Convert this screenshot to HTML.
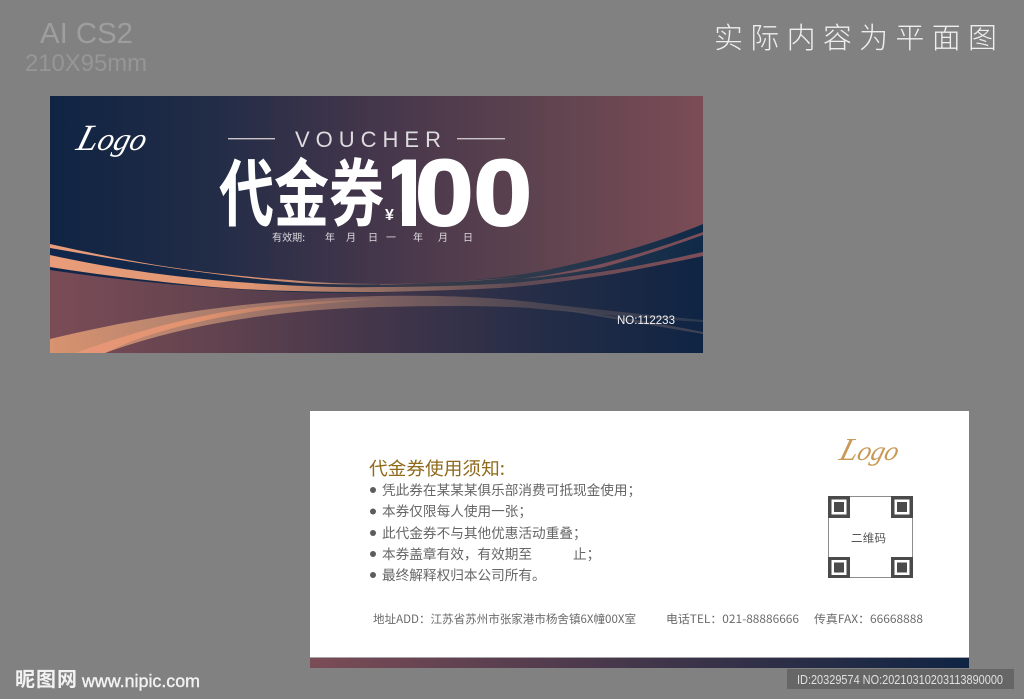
<!DOCTYPE html>
<html lang="zh">
<head>
<meta charset="utf-8">
<title>代金券</title>
<style>
html,body{margin:0;padding:0;background:#818181;width:1024px;height:699px;overflow:hidden}
svg{display:block}
.s{font-family:"Liberation Sans","Noto Sans CJK SC",sans-serif}
.c{font-family:"Noto Sans CJK SC","Liberation Sans",sans-serif}
</style>
</head>
<body>
<svg width="1024" height="699" viewBox="0 0 1024 699" xmlns="http://www.w3.org/2000/svg">
<defs>
<linearGradient id="top" gradientUnits="userSpaceOnUse" x1="50" y1="0" x2="703" y2="0">
<stop offset="0" stop-color="#0f2443"/><stop offset=".25" stop-color="#222c47"/><stop offset=".5" stop-color="#45364b"/><stop offset=".75" stop-color="#5e434f"/><stop offset="1" stop-color="#7b4c56"/>
</linearGradient>
<linearGradient id="bot" gradientUnits="userSpaceOnUse" x1="50" y1="0" x2="703" y2="0">
<stop offset="0" stop-color="#7b4c56"/><stop offset=".25" stop-color="#62434f"/><stop offset=".5" stop-color="#43364a"/><stop offset=".75" stop-color="#252d47"/><stop offset="1" stop-color="#0f2443"/>
</linearGradient>
<linearGradient id="nav" gradientUnits="userSpaceOnUse" x1="50" y1="0" x2="703" y2="0">
<stop offset="0" stop-color="#10264a"/><stop offset=".35" stop-color="#1a2b48"/><stop offset=".55" stop-color="#3a3a48"/><stop offset=".75" stop-color="#2c3a4c"/><stop offset="1" stop-color="#0f2a48"/>
</linearGradient>
<linearGradient id="or" gradientUnits="userSpaceOnUse" x1="50" y1="0" x2="703" y2="0">
<stop offset="0" stop-color="#e89c7a"/><stop offset=".3" stop-color="#e09673"/><stop offset=".52" stop-color="#8e6b62"/><stop offset=".72" stop-color="#5e4a55"/><stop offset="1" stop-color="#7f4f58"/>
</linearGradient>
<linearGradient id="sw" gradientUnits="userSpaceOnUse" x1="50" y1="0" x2="703" y2="0">
<stop offset="0" stop-color="#d8936f"/><stop offset=".2" stop-color="#b5836f"/><stop offset=".5" stop-color="#7f6160"/><stop offset=".75" stop-color="#4a4552"/><stop offset="1" stop-color="#2d3a50"/>
</linearGradient>
<linearGradient id="sw2" gradientUnits="userSpaceOnUse" x1="50" y1="0" x2="470" y2="0">
<stop offset="0" stop-color="#e8987a"/><stop offset=".35" stop-color="#e2936f"/><stop offset=".8" stop-color="#8d6a62"/><stop offset="1" stop-color="#6a5560" stop-opacity=".4"/>
</linearGradient>
<linearGradient id="bar" gradientUnits="userSpaceOnUse" x1="310" y1="0" x2="969" y2="0">
<stop offset="0" stop-color="#7b4c56"/><stop offset=".5" stop-color="#43364a"/><stop offset="1" stop-color="#0f2443"/>
</linearGradient>
<linearGradient id="gold" gradientUnits="userSpaceOnUse" x1="840" y1="435" x2="898" y2="465">
<stop offset="0" stop-color="#c99a56"/><stop offset="1" stop-color="#e3bd83"/>
</linearGradient>
<clipPath id="one"><polygon points="392,150 416,150 416,230 402,230 402,212 392,212"/></clipPath>
</defs>

<rect width="1024" height="699" fill="#818181"/>

<!-- Header text -->
<text class="s" x="40" y="43" font-size="29" fill="#9e9e9e" textLength="93" lengthAdjust="spacingAndGlyphs">AI CS2</text>
<text class="s" x="25" y="71" font-size="24" fill="#969696" textLength="122" lengthAdjust="spacingAndGlyphs">210X95mm</text>
<text class="c" x="714" y="48" font-size="29" fill="#eeeeee" textLength="283" style="font-weight:300">实际内容为平面图</text>

<!-- Voucher front -->
<rect x="50" y="96" width="653" height="257" fill="url(#top)"/>
<path d="M50 244C130 262 200 274 290 280C320 283 350 284 380 284C430 284 490 281 547 270C600 259 655 244 703 224V353H50Z" fill="url(#nav)"/>
<path d="M50 270C130 282 230 291 330 293C400 294 470 289 560 277C620 268 665 262 703 256V353H50Z" fill="url(#bot)"/>
<path d="M50 244C130 262 200 274 290 280C320 283 350 284 385 284C340 285 310 284 288 282C200 274 130 262 50 248Z" fill="url(#or)"/>
<path d="M50 255C110 268 160 275 213 280C270 285 330 288 380 287C430 287 480 285 513 283C550 279 580 275 613 270C650 264 680 257 703 252V256C680 261 650 267 613 274C580 279 540 285 500 288C460 290 420 291 380 292C320 292 260 291 213 287C150 281 100 275 50 267Z" fill="url(#or)"/>
<path d="M703 232C670 244 630 257 597 265C570 271 550 275 520 279C555 276 575 272 600 268C635 259 675 245 703 235Z" fill="#7b4f59"/>
<path d="M380 284C420 284 470 282 520 277L480 280C440 283 410 284 380 285Z" fill="#7a5c5c"/>
<!-- lower swoosh -->
<path d="M50 339C130 320 240 299 380 296C450 295 500 298 540 303C600 310 660 316 703 320V322C650 319 590 314 530 308C480 305 430 306 380 307C290 309 190 322 105 353H50Z" fill="url(#sw)"/>
<path d="M75 353C130 333 190 316 250 308C300 302 340 300 380 299C330 303 290 306 250 312C190 322 140 335 105 353Z" fill="url(#sw2)"/>
<path d="M545 307C600 314 655 322 703 332V334C650 325 595 316 545 307Z" fill="#4a4a58" opacity=".8"/>

<text transform="translate(75,150) skewX(-16)" font-family="Liberation Serif,serif" font-style="italic" fill="#ffffff"><tspan font-size="37">L</tspan><tspan font-size="32">ogo</tspan></text>

<rect x="228" y="138" width="47" height="1.4" fill="#c9c4c8"/>
<rect x="457" y="138" width="48" height="1.4" fill="#c9c4c8"/>
<text class="s" x="295" y="147" font-size="22" fill="#dddbde" textLength="146">VOUCHER</text>

<text class="c" transform="translate(219,220) scale(1,1.33)" font-size="55" font-weight="700" fill="#ffffff">代金券</text>
<g clip-path="url(#one)"><text class="s" transform="translate(381,225)" font-size="94" font-weight="700" fill="#ffffff" stroke="#ffffff" stroke-width="2">1</text></g>
<text class="s" transform="translate(415,225) scale(1.12,1)" font-size="94" font-weight="700" fill="#ffffff" stroke="#ffffff" stroke-width="2">00</text>
<text class="s" x="385" y="220" font-size="16" font-weight="700" fill="#ffffff">¥</text>

<g class="c" font-size="10" fill="#dedade">
<text x="272" y="241" textLength="33" lengthAdjust="spacingAndGlyphs">有效期:</text>
<text x="325" y="241">年</text><text x="346" y="241">月</text><text x="368" y="241">日</text>
<text x="386" y="241">一</text><text x="413" y="241">年</text><text x="438" y="241">月</text><text x="463" y="241">日</text>
</g>
<text class="s" x="617" y="324" font-size="11.5" fill="#f2f2f2">NO:112233</text>

<!-- Voucher back -->
<rect x="310" y="411" width="659" height="246" fill="#ffffff"/>
<rect x="310" y="657" width="659" height="1" fill="#a9a6ab"/>
<rect x="310" y="658" width="659" height="10" fill="url(#bar)"/>

<text class="c" x="369" y="475" font-size="18" fill="#8f6a1a" textLength="136" lengthAdjust="spacingAndGlyphs">代金券使用须知:</text>
<g fill="#5c5c5c">
<circle cx="373" cy="490" r="3"/><circle cx="373" cy="511.500" r="3"/><circle cx="373" cy="533" r="3"/><circle cx="373" cy="554" r="3"/><circle cx="373" cy="575" r="3"/>
</g>
<g class="c" font-size="13.650" fill="#666666">
<text x="382" y="495">凭此券在某某某俱乐部消费可抵现金使用&#65307;</text>
<text x="382" y="516">本券仅限每人使用一张&#65307;</text>
<text x="382" y="538">此代金券不与其他优惠活动重叠&#65307;</text>
<text x="382" y="559">本券盖章有效&#65292;有效期至</text>
<text x="573" y="559">止&#65307;</text>
<text x="382" y="580">最终解释权归本公司所有。</text>
</g>
<g class="c" font-size="11.500" fill="#6a6a6a">
<text x="373" y="623" textLength="263" lengthAdjust="spacingAndGlyphs">地址ADD&#65306;江苏省苏州市张家港市杨舍镇6X幢00X室</text>
<text x="666" y="623" textLength="133" lengthAdjust="spacingAndGlyphs">电话TEL&#65306;021-88886666</text>
<text x="814" y="623" textLength="109" lengthAdjust="spacingAndGlyphs">传真FAX&#65306;66668888</text>
</g>

<text transform="translate(838,460) skewX(-16)" font-family="Liberation Serif,serif" font-style="italic" fill="url(#gold)"><tspan font-size="32">L</tspan><tspan font-size="27">ogo</tspan></text>

<!-- QR placeholder -->
<rect x="828.500" y="496.500" width="84" height="81" fill="#ffffff" stroke="#8d8d8d" stroke-width="1"/>
<g>
<rect x="828" y="496" width="22" height="22" fill="#4a4a4a"/><rect x="831.500" y="499.500" width="15" height="15" fill="#ffffff"/><rect x="834" y="502" width="10" height="10" fill="#4a4a4a"/>
<rect x="891" y="496" width="22" height="22" fill="#4a4a4a"/><rect x="894.500" y="499.500" width="15" height="15" fill="#ffffff"/><rect x="897" y="502" width="10" height="10" fill="#4a4a4a"/>
<rect x="828" y="557" width="22" height="21" fill="#4a4a4a"/><rect x="831.500" y="560" width="15" height="15" fill="#ffffff"/><rect x="834" y="562.500" width="10" height="10" fill="#4a4a4a"/>
<rect x="891" y="557" width="22" height="21" fill="#4a4a4a"/><rect x="894.500" y="560" width="15" height="15" fill="#ffffff"/><rect x="897" y="562.500" width="10" height="10" fill="#4a4a4a"/>
</g>
<text class="c" x="851" y="542" font-size="11.500" fill="#555555" textLength="35">二维码</text>

<!-- Watermarks -->
<text class="c" x="15" y="686" font-size="20" font-weight="700" fill="#f2f2f2" textLength="62">昵图网</text>
<text class="s" x="82" y="687" font-size="17.500" fill="#f2f2f2" stroke="#f2f2f2" stroke-width=".4" textLength="118" lengthAdjust="spacingAndGlyphs">www.nipic.com</text>
<rect x="787" y="669" width="227" height="20" fill="#666666"/>
<text class="s" x="797" y="684" font-size="13" fill="#e0e0e0" textLength="206" lengthAdjust="spacingAndGlyphs">ID:20329574 NO:20210310203113890000</text>
</svg>
</body>
</html>
